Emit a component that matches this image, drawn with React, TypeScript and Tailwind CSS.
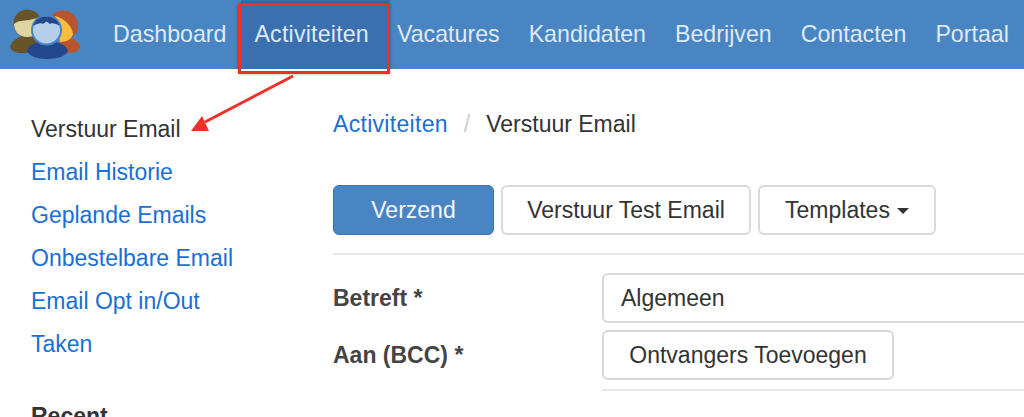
const navItems = ["Dashboard", "Activiteiten", "Vacatures", "Kandidaten", "Bedrijven", "Contacten", "Portaal"];
const sideLinks = ["Email Historie", "Geplande Emails", "Onbestelbare Email", "Email Opt in/Out", "Taken"];

function Logo() {
  return (
    <svg width="72" height="52" viewBox="0 0 72 52" className="shrink-0">
      {/* right person */}
      <path d="M50 30 C58 26 68 30 70 37 C70 41 66 44 60 44 L48 44 Z" fill="#b8552c" />
      <circle cx="53" cy="16.5" r="15" fill="#b8552c" />
      <path d="M45 7 C54 9 62 17 63 25 C62 30 57 33 50 33 Z" fill="#f7bd3e" />
      {/* left person */}
      <path d="M0 38 C2 31 9 27 17 26 C26 26 32 30 34 44 L12 44 C6 44 1 42 0 38 Z" fill="#655529" />
      <circle cx="17.5" cy="14.5" r="14" fill="#655529" />
      <path d="M4 15 C9 11 13 12 19 11 C24 10 27 8 30 10 C33 17 30 28 17.5 28 C9 28 4 22 4 15 Z" fill="#e0d5a0" />
      {/* front person */}
      <path d="M17 42 C18 36 28 32 37 32 C47 32 57 36 58 42 C56 47 47 50 37 50 C27 50 19 47 17 42 Z" fill="#21478c" />
      <circle cx="36.5" cy="21" r="15.5" fill="#4a85c3" />
      <circle cx="36.5" cy="21" r="13.5" fill="#b5cfea" />
      <path d="M23.5 17 C25 10 31 7.5 36.5 7.5 C42 7.5 48 10 49.5 17 C46 14 41 13.5 40 15 L36.5 12.5 L33 15 C32 13.5 27 14 23.5 17 Z" fill="#21478c" />
    </svg>
  );
}

export default function App() {
  return (
    <div className="relative h-[417px] w-[1024px] overflow-hidden bg-white font-['Liberation_Sans',Arial,sans-serif] text-[23px] text-[#333333]">
      <header className="flex h-[69px] items-center bg-[#4a85c3] pl-[10px]">
        <Logo />
        <nav className="ml-[16.5px] flex h-full text-[23.2px]">
          {navItems.map((item) => (
            <a
              key={item}
              className={`flex h-full items-center whitespace-nowrap text-[#dfe9f5] ${
                item === "Activiteiten"
                  ? "-mr-[7.5px] bg-[#3a70b0] pl-[13.5px] pr-[21px] tracking-[0.2px]"
                  : "px-[14.5px]"
              }`}
            >
              {item}
            </a>
          ))}
        </nav>
      </header>

      <div className="flex">
        <aside className="w-[333px] shrink-0 pl-[31px] pt-[39px]">
          <ul className="flex flex-col">
            <li className="flex h-[43px] items-center">Verstuur Email</li>
            {sideLinks.map((link) => (
              <li key={link} className="flex h-[43px] items-center text-[#1a6fd4]">
                {link}
              </li>
            ))}
          </ul>
          <h4 className="mt-[38px] font-bold leading-[24px]">Recent</h4>
        </aside>

        <main className="min-w-0 flex-1 pt-[42px]">
          <div className="flex h-[26px] items-center">
            <a className="tracking-[0.3px] text-[#1a6fd4]">Activiteiten</a>
            <span className="mx-[16px] text-[#cccccc]">/</span>
            <span>Verstuur Email</span>
          </div>

          <div className="mt-[48px] flex gap-[7px]">
            <button className="h-[50px] w-[161px] rounded-[6px] border border-[#3b72b0] bg-[#4a85c3] text-[#f2f6fb]">
              Verzend
            </button>
            <button className="h-[50px] w-[250px] rounded-[6px] border-2 border-[#d9d9d9] bg-white">
              Verstuur Test Email
            </button>
            <button className="flex h-[50px] w-[178px] items-center justify-center gap-[7px] rounded-[6px] border-2 border-[#d9d9d9] bg-white">
              Templates
              <span className="mt-[2px] border-x-[6px] border-t-[6px] border-x-transparent border-t-[#333333]" />
            </button>
          </div>

          <div className="mt-[18px] h-[2px] bg-[#e6e6e6]" />

          <div className="mt-[18px] flex items-center">
            <label className="w-[269px] shrink-0 font-bold text-[#444444]">Betreft *</label>
            <div className="flex h-[50px] flex-1 items-center rounded-l-[6px] border-y-2 border-l-2 border-[#d9d9d9] pl-[17px]">
              Algemeen
            </div>
          </div>

          <div className="mt-[7px] flex items-center">
            <label className="w-[269px] shrink-0 font-bold text-[#444444]">Aan (BCC) *</label>
            <button className="h-[50px] w-[292px] rounded-[6px] border-2 border-[#d9d9d9] bg-white">
              Ontvangers Toevoegen
            </button>
          </div>

          <div className="ml-[269px] mt-[9px] h-[2px] bg-[#e6e6e6]" />
        </main>
      </div>

      {/* annotation */}
      <div className="absolute left-[238px] top-[3px] h-[71px] w-[152px] border-[3px] border-[#f12f26] shadow-[0_0_3px_rgba(0,0,0,0.35)]" />
      <svg className="absolute left-[185px] top-[70px]" width="115" height="70" viewBox="0 0 115 70">
        <path d="M108 6 L20 52" stroke="#f12f26" strokeWidth="3" fill="none" />
        <path d="M6 61 L17 46 L24 61 Z" fill="#f12f26" />
      </svg>
    </div>
  );
}
